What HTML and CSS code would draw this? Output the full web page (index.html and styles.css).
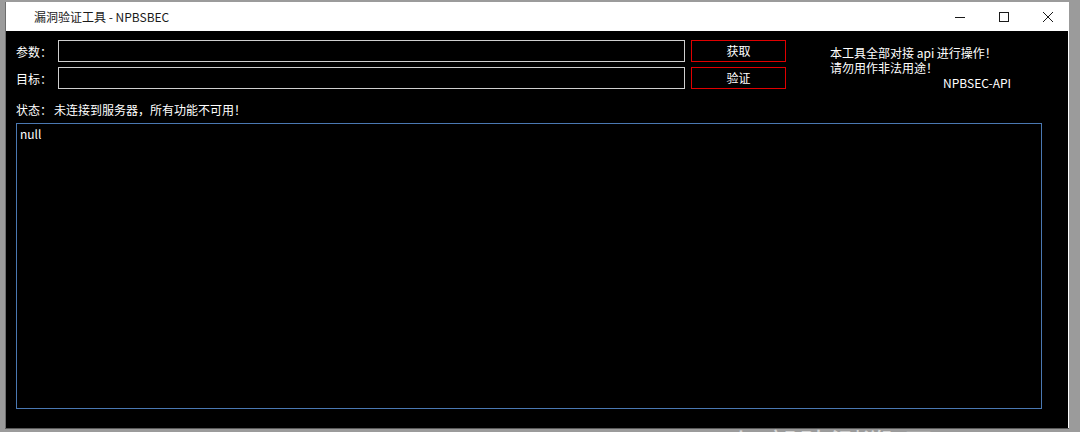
FILE: index.html
```html
<!DOCTYPE html>
<html lang="zh-CN">
<head>
<meta charset="utf-8">
<title>漏洞验证工具 - NPBSBEC</title>
<link rel="stylesheet" href="styles.css">
</head>
<body>
<div class="desktop">
  <div class="backdrop-text">丁丨 部队测溯 平</div>
  <div class="window">
    <div class="titlebar">
      <span class="title">漏洞验证工具 - NPBSBEC</span>
      <div class="controls">
        <span class="ctl"><svg width="10" height="10" viewBox="0 0 10 10"><path d="M0 5.5H10" stroke="#1a1a1a" stroke-width="1" fill="none"/></svg></span>
        <span class="ctl"><svg width="10" height="10" viewBox="0 0 10 10"><rect x="0.5" y="0.5" width="9" height="9" stroke="#1a1a1a" stroke-width="1" fill="none"/></svg></span>
        <span class="ctl"><svg width="10" height="10" viewBox="0 0 10 10"><path d="M0 0L10 10M10 0L0 10" stroke="#1a1a1a" stroke-width="1" fill="none"/></svg></span>
      </div>
    </div>
    <div class="client">
      <div class="top">
        <div class="form">
          <div class="row">
            <span class="label">参数：</span>
            <div class="field"></div>
            <div class="btn">获取</div>
          </div>
          <div class="row">
            <span class="label">目标：</span>
            <div class="field"></div>
            <div class="btn">验证</div>
          </div>
        </div>
        <div class="notes">
          <div class="note">本工具全部对接 api 进行操作！</div>
          <div class="note">请勿用作非法用途！</div>
          <div class="note brand">NPBSEC-API</div>
        </div>
      </div>
      <div class="status"><span class="status-key">状态：</span><span>未连接到服务器，所有功能不可用！</span></div>
      <div class="output">null</div>
    </div>
  </div>
</div>
</body>
</html>
```

FILE: styles.css
```css
* { box-sizing: border-box; }

html, body {
  margin: 0;
  padding: 0;
  width: 1080px;
  height: 432px;
  overflow: hidden;
}

body {
  font-family: "Microsoft YaHei", "Noto Sans CJK SC", "Noto Sans", sans-serif;
  font-size: 12px;
  background: #9a9a9a;
}

.desktop {
  position: relative;
  width: 1080px;
  height: 432px;
  background: #9b9b9b;
  overflow: hidden;
}

.backdrop-text {
  position: absolute;
  left: 694px;
  top: 427px;
  font-size: 30px;
  line-height: 30px;
  color: #d6d6d6;
  letter-spacing: 2px;
  white-space: nowrap;
}

.window {
  position: absolute;
  left: 5px;
  top: 2px;
  width: 1064px;
  height: 426px;
  display: flex;
  flex-direction: column;
  border-left: 1px solid #6e6e6e;
  border-right: 1px solid #ffffff;
  box-shadow: 0 1px 0 #5a5a5a;
}

.titlebar {
  height: 29px;
  flex: none;
  background: #ffffff;
  display: flex;
  align-items: center;
  justify-content: space-between;
}

.title {
  padding-left: 28px;
  color: #1a1a1a;
  font-size: 12px;
  line-height: 16px;
}

.controls {
  display: flex;
  height: 29px;
  margin-right: -2px;
}

.ctl {
  width: 44px;
  height: 29px;
  display: flex;
  align-items: center;
  justify-content: center;
}

.client {
  flex: 1;
  background: #000000;
  padding: 9px 0 0 10px;
  display: flex;
  flex-direction: column;
  color: #ffffff;
}

.top {
  display: flex;
  align-items: flex-start;
}

.form {
  display: flex;
  flex-direction: column;
  gap: 5px;
}

.row {
  display: flex;
  align-items: center;
  height: 22px;
}

.label {
  width: 42px;
  line-height: 16px;
  padding-top: 1px;
}

.field {
  width: 627px;
  height: 22px;
  border: 1px solid #cfcfcf;
  background: #000000;
}

.btn {
  margin-left: 6px;
  width: 95px;
  height: 22px;
  border: 1px solid #e00000;
  display: flex;
  align-items: center;
  justify-content: center;
  line-height: 16px;
}

.notes {
  margin-left: 44px;
  margin-top: 5px;
  display: flex;
  flex-direction: column;
}

.note {
  line-height: 15px;
  white-space: nowrap;
}

.brand {
  padding-left: 113px;
}

.status {
  margin-top: 12px;
  line-height: 16px;
  white-space: pre;
}

.status-key {
  display: inline-block;
  width: 38px;
}

.output {
  margin-top: 5px;
  width: 1026px;
  height: 286px;
  border: 1px solid #4a78b2;
  padding: 3px 0 0 3px;
  line-height: 14px;
}
```
